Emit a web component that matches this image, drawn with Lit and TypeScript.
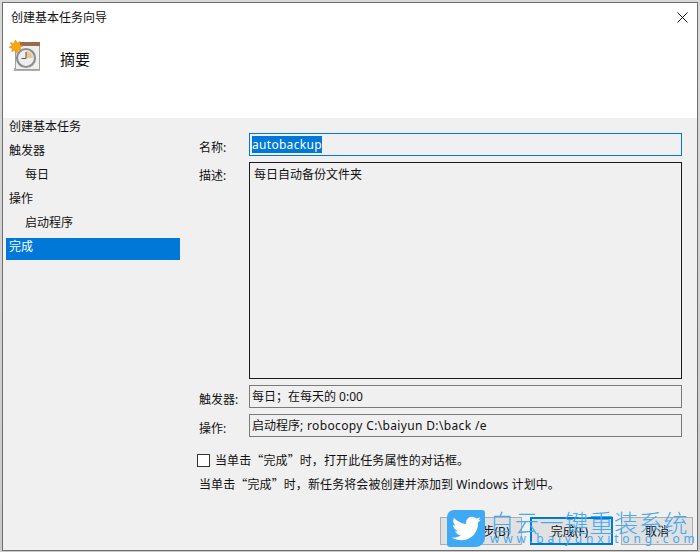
import { LitElement, html, css, svg } from "lit";
import { customElement } from "lit/decorators.js";

const NAV = [
  { t: "创建基本任务", sub: false },
  { t: "触发器", sub: false },
  { t: "每日", sub: true },
  { t: "操作", sub: false },
  { t: "启动程序", sub: true },
  { t: "完成", sub: false, sel: true },
];

@customElement("app-root")
export class AppRoot extends LitElement {
  static styles = css`
    :host {
      display: block;
      width: 700px;
      height: 552px;
      position: relative;
      overflow: hidden;
      box-sizing: border-box;
      padding: 2px 2px 1px 2px;
      background: linear-gradient(#d9d9d9, #c9c9c9);
      font-family: "Noto Sans", "Noto Sans CJK SC", sans-serif;
      font-size: 12px;
      color: #111;
    }
    .window {
      height: 549px;
      box-sizing: border-box;
      border: 1px solid #6f6f6f;
      display: flex;
      flex-direction: column;
      background: #f0f0f0;
    }
    .header {
      height: 115px;
      flex: none;
      background: #fff;
      box-sizing: border-box;
      padding: 5px 0 0 8px;
      position: relative;
    }
    .title { line-height: 20px; }
    .head-row {
      display: flex;
      align-items: center;
      margin-top: 12px;
      height: 36px;
      margin-left: -2px;
    }
    .head-row svg { flex: none; width: 36px; height: 36px; }
    .head-row span { font-size: 15px; margin-left: 15px; line-height: 20px; position: relative; top: 1px; }
    .close {
      position: absolute;
      right: 9px;
      top: 9px;
      width: 11px;
      height: 11px;
    }
    .body { flex: 1; display: flex; min-height: 0; }
    .nav { width: 177px; flex: none; padding-left: 3px; box-sizing: border-box; }
    .item {
      height: 22px;
      margin-bottom: 2px;
      line-height: 17px;
      padding-left: 3px;
    }
    .item.sub { padding-left: 19px; }
    .item.sel { background: #0078d7; color: #fff; }
    .main {
      flex: 1;
      display: flex;
      flex-direction: column;
      padding: 15px 4px 5px 19px;
      min-width: 0;
    }
    .form {
      display: grid;
      grid-template-columns: 50px 433px;
      grid-template-rows: 23px 217px 23px 23px;
      row-gap: 6px;
    }
    .label { line-height: 17px; padding-top: 6px; }
    .desc-label { padding-top: 5px; }
    .field {
      box-sizing: border-box;
      border: 1px solid #7a7a7a;
      padding: 2px;
      line-height: 17px;
      background: #f0f0f0;
    }
    .latin { letter-spacing: 0.35px; }
    .field.focus { border-color: #0078d7; }
    .field.desc { border-color: #1c1c1c; padding: 3px 4px; }
    .selected { background: #0078d7; color: #fff; display: inline-block; height: 17px; letter-spacing: 0.3px; }
    .quote { font-family: "Noto Sans CJK SC", sans-serif; }
    .check-row {
      display: flex;
      align-items: center;
      margin-top: 16px;
      height: 14px;
      gap: 5px;
      margin-left: -2px;
      letter-spacing: 0.1px;
    }
    .box {
      width: 13px;
      height: 13px;
      box-sizing: border-box;
      border: 1px solid #333;
      background: #fff;
      flex: none;
    }
    .note { margin-top: 8px; line-height: 17px; letter-spacing: 0.1px; }
    .buttons {
      margin-top: auto;
      display: flex;
      justify-content: flex-end;
      gap: 8px;
    }
    .btn {
      box-sizing: border-box;
      height: 28px;
      width: 82px;
      border: 1px solid #adadad;
      background: #e1e1e1;
      display: flex;
      align-items: center;
      justify-content: center;
      line-height: 17px;
    }
    .btn.back { padding-left: 6px; }
    .btn.primary { border: 2px solid #0078d7; width: 83px; padding-right: 4px; }
    .btn.cancel { width: 72px; }
    .mark {
      position: absolute;
      left: 447px;
      top: 510px;
      display: flex;
      gap: 5px;
      color: #46a9f0;
    }
    .tile {
      width: 38px;
      height: 37px;
      background: #3fa9f5;
      border-radius: 7px 3px 9px 3px;
      display: flex;
      align-items: center;
      justify-content: center;
    }
    .tile svg { width: 29px; height: 29px; }
    .mark-text { display: flex; flex-direction: column; }
    .cn {
      font-size: 24px;
      line-height: 26px;
      letter-spacing: 0.8px;
      font-weight: 300;
      white-space: nowrap;
    }
    .en {
      font-size: 12px;
      line-height: 12px;
      letter-spacing: 3.8px;
      margin-top: -3px;
      white-space: nowrap;
    }
  `;

  icon() {
    return svg`
      <path d="M5 28h26v3H5z" fill="#b0b0b0"/>
      <path d="M6.5 5.5h24v24h-24z" fill="#f1efe9" stroke="#a0a0a0" stroke-width="1"/>
      <path d="M11 2h20v4H11z" fill="#9a6a52"/>
      <circle cx="17" cy="18" r="9" fill="#eeeeee" stroke="#8a9097" stroke-width="2.2"/>
      <path d="M17 11a7 7 0 0 1 7 7h-7z" fill="#e9c98e"/>
      <path d="M17 12v6.5h-4.5" fill="none" stroke="#555" stroke-width="1"/>
      <path d="M6.5 0l1.7 3 3-1.4-.7 3.3 3.2 1-2.8 1.7 1.5 3-3.3-.6-1.4 3-1.9-2.8-3 1.4.5-3.3-3.2-1 2.9-1.6-1.4-3 3.3.7z" fill="#f6a90f" stroke="#f07f00" stroke-width="0.6"/>
    `;
  }

  render() {
    return html`
      <div class="window">
        <div class="header">
          <div class="title">创建基本任务向导</div>
          <div class="head-row">
            <svg viewBox="0 0 36 36">${this.icon()}</svg>
            <span>摘要</span>
          </div>
          <svg class="close" viewBox="0 0 11 11"><path d="M.5.5l10 10M10.5.5l-10 10" stroke="#111" stroke-width="1" fill="none"/></svg>
        </div>
        <div class="body">
          <div class="nav">
            ${NAV.map(
              (n) => html`<div class="item ${n.sub ? "sub" : ""} ${n.sel ? "sel" : ""}">${n.t}</div>`
            )}
          </div>
          <div class="main">
            <div class="form">
              <div class="label">名称:</div>
              <div class="field focus"><span class="selected">autobackup</span></div>
              <div class="label desc-label">描述:</div>
              <div class="field desc">每日自动备份文件夹</div>
              <div class="label">触发器:</div>
              <div class="field">每日；在每天的 0:00</div>
              <div class="label">操作:</div>
              <div class="field">启动程序<span class="latin">; robocopy C:\\baiyun D:\\back /e</span></div>
            </div>
            <div class="check-row"><span class="box"></span><span>当单击<span class="quote">“</span>完成<span class="quote">”</span>时，打开此任务属性的对话框。</span></div>
            <div class="note">当单击<span class="quote">“</span>完成<span class="quote">”</span>时，新任务将会被创建并添加到 Windows 计划中。</div>
            <div class="buttons">
              <div class="btn back">上一步(B)</div>
              <div class="btn primary">完成(F)</div>
              <div class="btn cancel">取消</div>
            </div>
          </div>
        </div>
      </div>
      <div class="mark">
        <div class="tile">
          <svg viewBox="0 0 24 24"><path fill="#fff" d="M23.954 4.569c-.885.389-1.83.654-2.825.775 1.014-.611 1.794-1.574 2.163-2.723-.951.555-2.005.959-3.127 1.184-.896-.959-2.173-1.559-3.591-1.559-2.717 0-4.92 2.203-4.92 4.917 0 .39.045.765.127 1.124C7.691 8.094 4.066 6.13 1.64 3.161c-.427.722-.666 1.561-.666 2.475 0 1.71.87 3.213 2.188 4.096-.807-.026-1.566-.248-2.228-.616v.061c0 2.385 1.693 4.374 3.946 4.827-.413.111-.849.171-1.296.171-.314 0-.615-.03-.916-.086.631 1.953 2.445 3.377 4.604 3.417-1.68 1.319-3.809 2.105-6.102 2.105-.39 0-.779-.023-1.17-.067 2.189 1.394 4.768 2.209 7.557 2.209 9.054 0 13.999-7.496 13.999-13.986 0-.209 0-.42-.015-.63.961-.689 1.8-1.65 2.46-2.75z"/></svg>
        </div>
        <div class="mark-text">
          <div class="cn">白云一键重装系统</div>
          <div class="en">www.baiyunxitong.com</div>
        </div>
      </div>
    `;
  }
}
